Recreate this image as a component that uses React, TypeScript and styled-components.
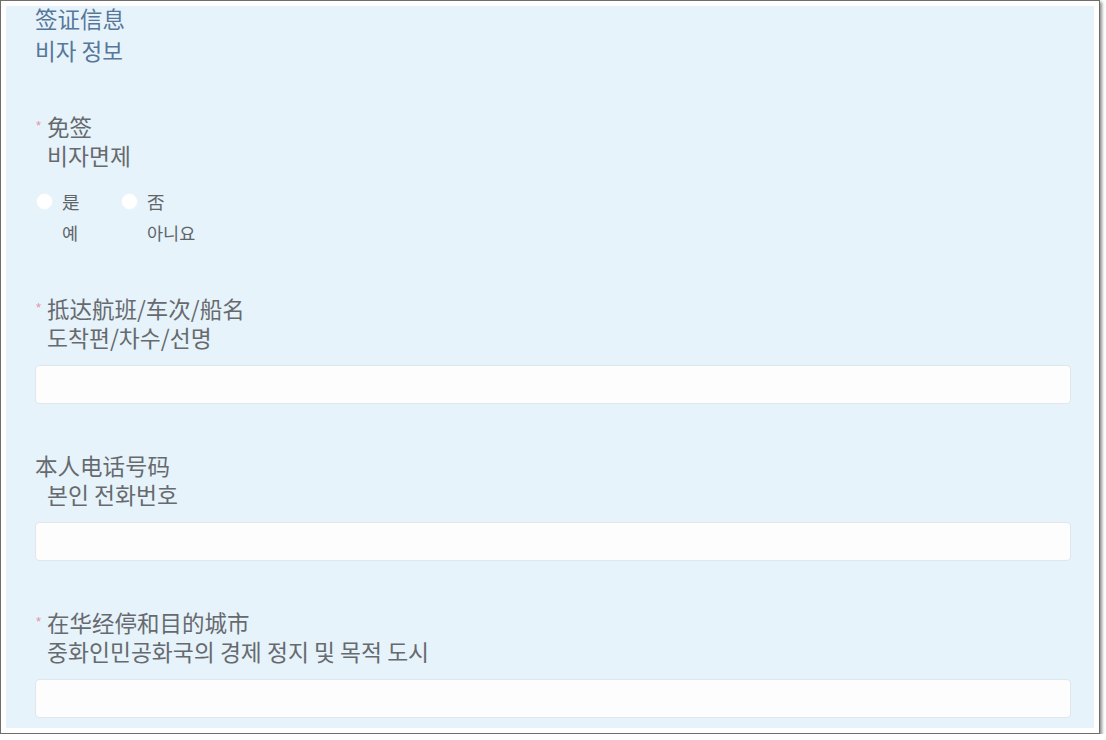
import React from "react";
import styled, { createGlobalStyle } from "styled-components";

const Global = createGlobalStyle`
  html, body { margin: 0; padding: 0; background: #ffffff; }
  body { font-family: "Noto Sans CJK SC", "Noto Sans CJK KR", "Noto Sans", sans-serif; }
  * { box-sizing: border-box; }
`;

const Frame = styled.div`
  width: 1100px;
  height: 734px;
  border: 1px solid #6e6e6e;
  background: #ffffff;
  padding: 5px;
  box-shadow: 2px 2px 3px rgba(0, 0, 0, 0.45);
  overflow: hidden;
`;

const Panel = styled.div`
  height: 100%;
  background: #e6f3fb;
  padding: 0 23px 0 29px;
  display: flex;
  flex-direction: column;
`;

const Header = styled.div`
  display: flex;
  flex-direction: column;
  color: #57779a;
  font-size: 22.5px;
`;

const HeaderZh = styled.div`
  line-height: 24px;
  font-family: "Noto Sans CJK SC", sans-serif;
`;

const HeaderKo = styled.div`
  line-height: 24px;
  margin-top: 8px;
  font-family: "Noto Sans CJK KR", sans-serif;
`;

const Field = styled.div<{ $top: number }>`
  display: flex;
  flex-direction: column;
  margin-top: ${(p) => p.$top}px;
`;

const LabelZh = styled.div`
  display: flex;
  align-items: center;
  line-height: 30px;
  height: 30px;
  font-size: 22.5px;
  color: #666a6e;
  font-family: "Noto Sans CJK SC", sans-serif;
  white-space: nowrap;
`;

const Star = styled.span`
  width: 12px;
  flex: none;
  font-size: 13px;
  color: #e694a2;
  padding-left: 1px;
  line-height: 1;
  margin-top: -1px;
  font-family: "Liberation Sans", sans-serif;
`;

const LabelKo = styled.div`
  line-height: 30px;
  height: 30px;
  padding-left: 12px;
  font-size: 22.8px;
  color: #666a6e;
  font-family: "Noto Sans CJK KR", sans-serif;
  white-space: nowrap;
`;

const Input = styled.input`
  display: block;
  width: 100%;
  height: 39px;
  margin-top: 12px;
  border: 1px solid #dfe7ec;
  border-radius: 4px;
  background: #fdfdfd;
  outline: none;
  padding: 0 10px;
  font-size: 16px;
`;

const RadioGroup = styled.div`
  display: flex;
  margin-top: 18px;
`;

const Option = styled.label`
  display: flex;
  flex-direction: column;
  width: 85px;
  cursor: pointer;
`;

const OptionRow = styled.div`
  display: flex;
  align-items: center;
  height: 24px;
`;

const Circle = styled.span`
  width: 17px;
  height: 17px;
  border-radius: 50%;
  background: #ffffff;
  border: 1px solid #f1f5f8;
  margin: 0 9px 0 1px;
  flex: none;
`;

const OptionZh = styled.span`
  font-size: 17.5px;
  color: #606468;
  font-family: "Noto Sans CJK SC", sans-serif;
`;

const OptionKo = styled.span`
  display: block;
  height: 24px;
  line-height: 24px;
  margin-top: 8px;
  padding-left: 27px;
  font-size: 17.5px;
  color: #606468;
  font-family: "Noto Sans CJK KR", sans-serif;
`;

const fields = [
  { zh: "抵达航班/车次/船名", ko: "도착편/차수/선명", required: true, top: 48 },
  { zh: "本人电话号码", ko: "본인 전화번호", required: false, top: 46 },
  { zh: "在华经停和目的城市", ko: "중화인민공화국의 경제 정지 및 목적 도시", required: true, top: 46 },
];

export default function App() {
  return (
    <>
      <Global />
      <Frame>
        <Panel>
          <Header>
            <HeaderZh>签证信息</HeaderZh>
            <HeaderKo>비자 정보</HeaderKo>
          </Header>

          <Field $top={49}>
            <LabelZh>
              <Star>*</Star>免签
            </LabelZh>
            <LabelKo>비자면제</LabelKo>
            <RadioGroup>
              <Option>
                <OptionRow>
                  <Circle />
                  <OptionZh>是</OptionZh>
                </OptionRow>
                <OptionKo>예</OptionKo>
              </Option>
              <Option>
                <OptionRow>
                  <Circle />
                  <OptionZh>否</OptionZh>
                </OptionRow>
                <OptionKo>아니요</OptionKo>
              </Option>
            </RadioGroup>
          </Field>

          {fields.map((f) => (
            <Field key={f.zh} $top={f.top}>
              <LabelZh>
                {f.required && <Star>*</Star>}
                {f.zh}
              </LabelZh>
              <LabelKo>{f.ko}</LabelKo>
              <Input type="text" />
            </Field>
          ))}
        </Panel>
      </Frame>
    </>
  );
}
